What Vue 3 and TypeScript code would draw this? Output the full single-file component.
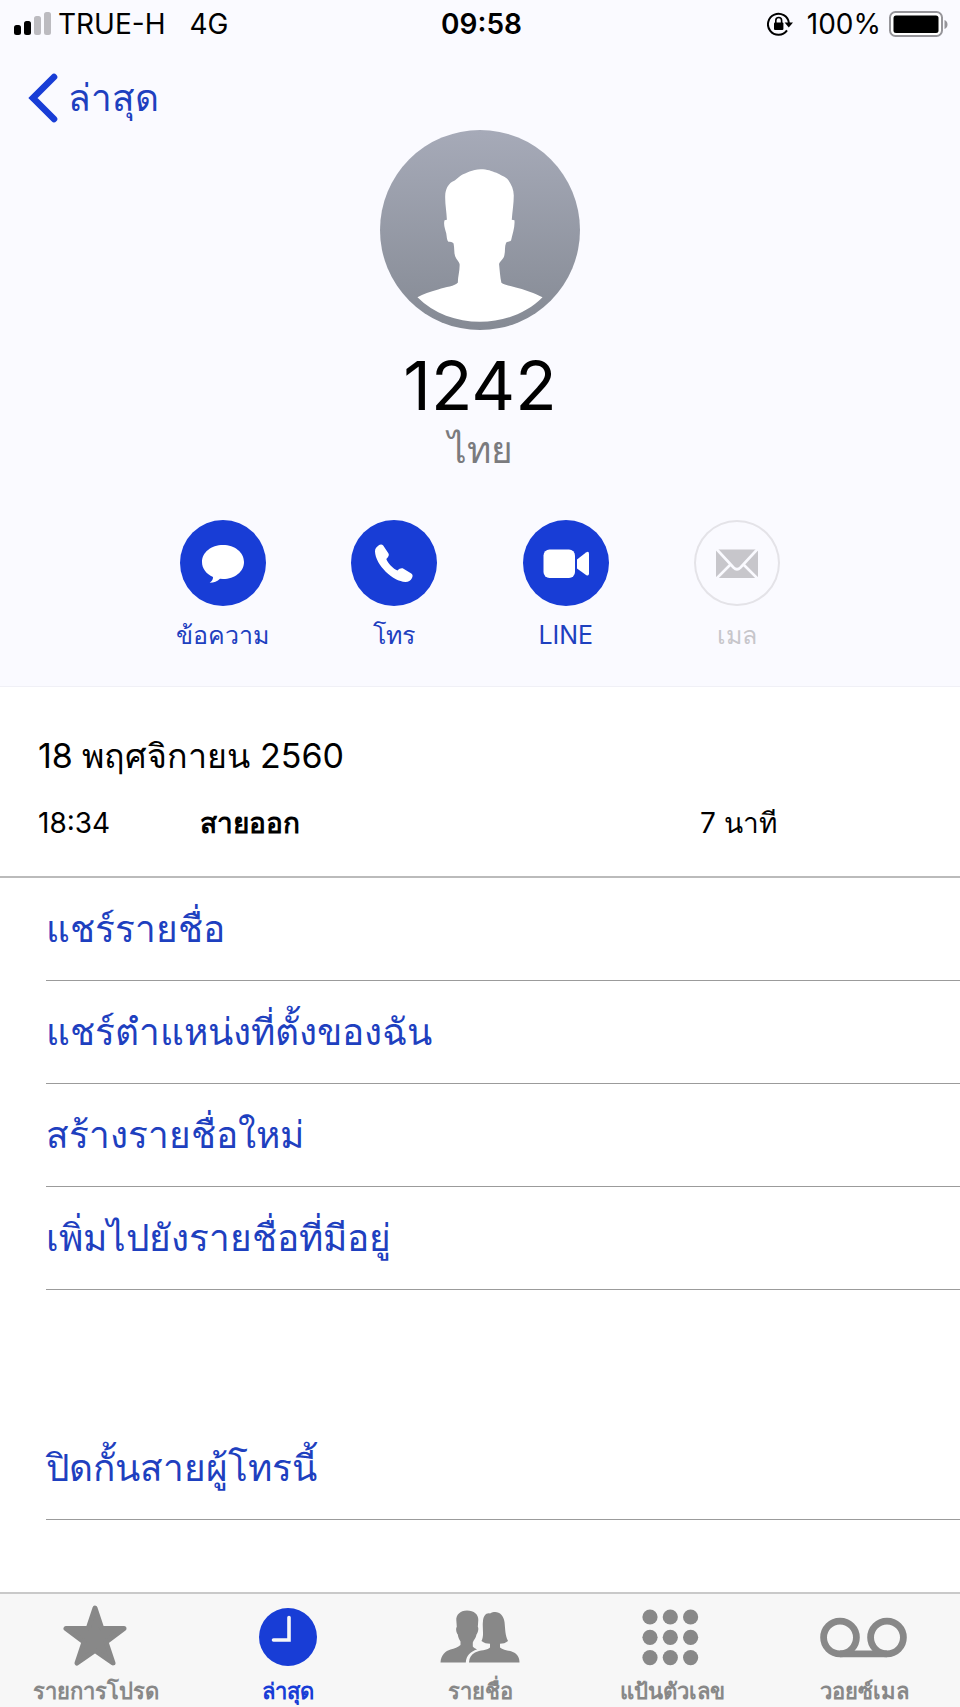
<script setup lang="ts">
import { ref } from 'vue'

interface QuickAction {
  id: string
  label: string
  disabled?: boolean
}

interface CallEntry {
  time: string
  kind: string
  duration: string
}

interface Tab {
  id: string
  label: string
}

const quickActions: QuickAction[] = [
  { id: 'message', label: 'ข้อความ' },
  { id: 'call', label: 'โทร' },
  { id: 'video', label: 'LINE' },
  { id: 'mail', label: 'เมล', disabled: true },
]

const calls: CallEntry[] = [{ time: '18:34', kind: 'สายออก', duration: '7 นาที' }]

const contactOptions: string[] = [
  'แชร์รายชื่อ',
  'แชร์ตำแหน่งที่ตั้งของฉัน',
  'สร้างรายชื่อใหม่',
  'เพิ่มไปยังรายชื่อที่มีอยู่',
]

const tabs: Tab[] = [
  { id: 'favorites', label: 'รายการโปรด' },
  { id: 'recents', label: 'ล่าสุด' },
  { id: 'contacts', label: 'รายชื่อ' },
  { id: 'keypad', label: 'แป้นตัวเลข' },
  { id: 'voicemail', label: 'วอยซ์เมล' },
]

const activeTab = ref('recents')
const dots = [8, 28.3, 48.6]
</script>

<template>
  <div class="screen">
    <header class="header">
      <div class="status">
        <div class="status-side">
          <svg class="signal" viewBox="0 0 38 24" aria-hidden="true">
            <rect x="0" y="13" width="7" height="10" rx="2.5" fill="#000" />
            <rect x="10" y="9" width="7" height="14" rx="2.5" fill="#000" />
            <rect x="20" y="4" width="7" height="19" rx="2.5" fill="#bcbbc0" />
            <rect x="30" y="0" width="7" height="23" rx="2.5" fill="#bcbbc0" />
          </svg>
          <span class="carrier">TRUE-H</span>
          <span>4G</span>
        </div>
        <time class="clock">09:58</time>
        <div class="status-side status-right">
          <svg class="lock" viewBox="0 0 26 24" aria-hidden="true">
            <path d="M20 18.400A10.500 10.500 0 1 1 21.900 11" fill="none" stroke="#000" stroke-width="2" />
            <path d="M17.600 10.600H26L21.800 15.600z" />
            <rect x="7" y="10.600" width="9.400" height="7.400" rx="1" />
            <path d="M8.800 11V8.400a2.900 2.900 0 0 1 5.800 0V11" fill="none" stroke="#000" stroke-width="1.600" />
          </svg>
          <span>100%</span>
          <svg class="battery" viewBox="0 0 60 27" aria-hidden="true">
            <rect x="1" y="1" width="52" height="24" rx="5.500" fill="#fff" stroke="#96959a" stroke-width="2" />
            <rect x="4.500" y="4.500" width="45" height="17.500" rx="2.500" />
            <path d="M55.500 9c4 1.400 4 7.600 0 9z" fill="#96959a" />
          </svg>
        </div>
      </div>

      <nav class="nav">
        <button class="back" type="button">
          <svg class="chevron" viewBox="0 0 30 50" aria-hidden="true">
            <path d="M26 4 5 25l21 21" fill="none" stroke="currentColor" stroke-width="6.600" stroke-linecap="round" stroke-linejoin="miter" />
          </svg>
          <span>ล่าสุด</span>
        </button>
      </nav>

      <svg class="avatar" viewBox="61 29 598 598" aria-hidden="true">
        <defs>
          <linearGradient id="avatar-fill" x1="0" y1="0" x2="0" y2="1">
            <stop offset="0" stop-color="#a6aab8" />
            <stop offset="1" stop-color="#858a94" />
          </linearGradient>
        </defs>
        <circle cx="360" cy="328" r="299" fill="url(#avatar-fill)" />
        <path
          fill="#fff"
          d="M362 146C337 147 318 157 304 164C294 170 288 179 277 184C264 192 257 207 256 225C255 250 260 272 261 297L254 299C250 312 256 326 259 338C261 350 261 360 266 363C271 365 277 362 281 368C284 382 282 397 286 407C290 417 297 422 299 430C300 449 293 470 294 485C285 496 258 498 235 506C210 513 190 520 173 529C270 627 450 627 547 529C520 515 500 509 476 502C454 496 433 493 424 486C420 468 419 449 417 430C421 420 431 415 433 403C436 390 433 378 438 366C443 361 450 364 453 359C457 340 465 320 463 299L455 297C457 272 461 250 461 225C461 207 454 192 445 179C436 168 421 164 409 157C395 151 382 146 362 146Z"
        />
      </svg>
      <h1 class="name">1242</h1>
      <p class="region">ไทย</p>

      <div class="actions">
        <button v-for="action in quickActions" :key="action.id" class="action" type="button" :disabled="action.disabled">
          <span class="action-disc">
            <svg viewBox="0 0 86 86" aria-hidden="true">
              <path
                v-if="action.id === 'message'"
                fill="#fff"
                d="M43 25c11.800 0 21 7.400 21 17s-9.200 17-21 17l-3-.2c-2.600 2.400-6 4-10.300 4 2.200-1.600 3.400-3.500 3.300-5.800C26.300 54 22 48.600 22 42c0-9.600 9.200-17 21-17z"
              />
              <path
                v-else-if="action.id === 'call'"
                fill="#fff"
                d="M27.500 25.500C29 24.300 31 24 32.200 25.600L37.500 33.500C38.400 35.200 37.500 36.700 35.300 39C36.500 43 42.500 49 46.500 50.500C48.500 48.500 50.500 47.800 52.500 48.700L60.300 53.400C62 54.600 61.800 56.200 61 58C59.700 60.500 57.500 62 54.500 62C42 61.500 24.500 45 24 31.500C23.900 28.800 25.500 26.900 27.500 25.500Z"
              />
              <g v-else-if="action.id === 'video'" fill="#fff">
                <rect x="20.500" y="29.500" width="31.500" height="28.500" rx="6" />
                <path d="M54 39.500 63 32.500Q66 30.500 66 34V53.500Q66 56.500 63 55L54 48.500Z" />
              </g>
              <g v-else>
                <rect x="22" y="29.500" width="42" height="28.500" fill="#c7c6cb" />
                <path d="M21 27.500 39.500 47.500Q43 51 46.500 47.500L65 27.500M21 60 36.500 44.500M65 60 49.500 44.500" fill="none" stroke="#fafaff" stroke-width="2.600" />
              </g>
            </svg>
          </span>
          <span class="action-label">{{ action.label }}</span>
        </button>
      </div>
    </header>

    <main class="content">
      <section class="log">
        <h2 class="log-date">18 พฤศจิกายน 2560</h2>
        <div v-for="call in calls" :key="call.time" class="log-row">
          <time>{{ call.time }}</time>
          <strong>{{ call.kind }}</strong>
          <span>{{ call.duration }}</span>
        </div>
      </section>

      <ul class="options">
        <li v-for="option in contactOptions" :key="option">
          <button class="option" type="button">{{ option }}</button>
        </li>
      </ul>
      <ul class="options options-block">
        <li>
          <button class="option" type="button">ปิดกั้นสายผู้โทรนี้</button>
        </li>
      </ul>
    </main>

    <nav class="tabs">
      <button
        v-for="tab in tabs"
        :key="tab.id"
        class="tab"
        :class="{ active: tab.id === activeTab }"
        type="button"
        @click="activeTab = tab.id"
      >
        <svg v-if="tab.id === 'favorites'" class="tab-icon" viewBox="0 0 90 64" aria-hidden="true">
          <path d="M44 5 50.800 25.500H73L55 39 62 60 44 47.500 26 60 33 39 15 25.500H37.200Z" fill="currentColor" stroke="currentColor" stroke-width="5" stroke-linejoin="round" />
        </svg>
        <svg v-else-if="tab.id === 'recents'" class="tab-icon" viewBox="0 0 90 64" aria-hidden="true">
          <circle cx="45" cy="34" r="29" fill="currentColor" />
          <path d="M46 14.500V37H30.500" fill="none" stroke="#f7f7f7" stroke-width="3.600" stroke-linecap="round" />
        </svg>
        <svg v-else-if="tab.id === 'contacts'" class="tab-icon" viewBox="1 1 90 64" aria-hidden="true">
          <g fill="currentColor">
            <path d="M33 8.500C40 8.500 44.500 12.500 44.300 18L43.800 25C45 26 44 31 42.500 32.500C42 36 39.500 38 38.800 40.500V44.500C40 46 41.500 46.500 43 47.500C36.500 49.500 32 54 31.800 60.500H6.500C7 53 11.500 49 16.500 47.500C20.500 46.500 24 45.500 26.500 43V39.500C25 37 24 35 23.800 32.500C22.300 31 21.500 26 22.800 25L22.300 18C22 13 26 8.500 33 8.500Z" />
            <path d="M56 11.500C63 7.500 69.500 12 70.500 20C71.300 27 71 33 74 39C71.500 41.300 69 41.500 66 41.700V45.500C69 48.500 75 48 80 50.500C83.500 52.500 85.500 55.500 85.500 60.500H35C35.300 55.500 37.300 52.500 41 50.500C46 48 53 48.500 56 45.500V41.700C53 41.500 50 41.300 47.500 39C50.500 33 48 26 49 19C49.500 14 52 10.500 56 11.500Z" />
          </g>
        </svg>
        <svg v-else-if="tab.id === 'keypad'" class="tab-icon" viewBox="-15 8 90 64" aria-hidden="true">
          <template v-for="cy in dots" :key="cy">
            <circle v-for="cx in dots" :key="cx" :cx="cx" :cy="cy + 14" r="7.600" fill="currentColor" />
          </template>
        </svg>
        <svg v-else class="tab-icon" viewBox="0 0 90 64" aria-hidden="true">
          <g fill="none" stroke="currentColor" stroke-width="6.800">
            <circle cx="21" cy="34.500" r="16.400" />
            <circle cx="68" cy="34.500" r="16.400" />
            <path d="M21 50.900H68" />
          </g>
        </svg>
        <span class="tab-label">{{ tab.label }}</span>
      </button>
    </nav>
  </div>
</template>

<style>
html,
body {
  margin: 0;
  background: #fff;
}
</style>

<style scoped>
.screen {
  --blue: #183dd6;
  --label-blue: #1e40bf;
  display: flex;
  flex-direction: column;
  min-height: 100vh;
  overflow: hidden;
  background: #fff;
  color: #000;
  font-family: Inter, sans-serif;
}

button {
  margin: 0;
  padding: 0;
  border: 0;
  background: none;
  color: inherit;
  font: inherit;
  cursor: pointer;
}

svg {
  display: block;
  flex: none;
}

.header {
  display: flex;
  flex-direction: column;
  align-items: center;
  background: #fafaff;
  border-bottom: 1px solid #f0f0f6;
}

.status {
  display: grid;
  grid-template-columns: 1fr auto 1fr;
  align-items: center;
  align-self: stretch;
  height: 48px;
  padding: 0 11px 0 14px;
  font-size: 28px;
  line-height: 32px;
}

.status-side {
  display: flex;
  align-items: center;
}

.status-right {
  justify-content: flex-end;
}

.signal {
  width: 38px;
  height: 24px;
  margin-right: 6px;
}

.carrier {
  margin-right: 24px;
}

.clock {
  font-weight: 600;
}

.lock {
  width: 26px;
  height: 24px;
  margin-right: 14px;
}

.battery {
  width: 60px;
  height: 27px;
  margin-left: 8px;
}

.nav {
  display: flex;
  align-items: center;
  align-self: stretch;
  height: 82px;
  padding: 0 28px;
}

.back {
  display: flex;
  align-items: center;
  gap: 10px;
  padding-top: 18px;
  color: var(--label-blue);
  font-size: 37px;
  line-height: 50px;
}

.chevron {
  width: 30px;
  height: 50px;
  color: var(--blue);
}

.avatar {
  width: 200px;
  height: 200px;
}

.name {
  margin: 15px 0 0;
  font-size: 68px;
  font-weight: 400;
  line-height: 80px;
}

.region {
  margin: 0;
  color: #7b7b7e;
  font-size: 37px;
  line-height: 50px;
}

.actions {
  display: grid;
  grid-template-columns: repeat(4, 1fr);
  width: 71.5%;
  margin-top: 45px;
  padding-bottom: 34px;
}

.action {
  display: flex;
  flex-direction: column;
  align-items: center;
  gap: 12px;
  color: var(--label-blue);
}

.action-disc {
  border-radius: 50%;
  background: var(--blue);
}

.action-disc svg {
  width: 86px;
  height: 86px;
}

.action:disabled {
  color: #c7c6cb;
  cursor: default;
}

.action:disabled .action-disc {
  background: none;
  box-shadow: inset 0 0 0 2px #e4e3e8;
}

.action-label {
  font-size: 25px;
  line-height: 34px;
}

.content {
  flex: 1;
}

.log {
  padding: 43px 38px 33px;
  border-bottom: 2px solid #bbb;
}

.log-date {
  margin: 0;
  font-size: 34px;
  font-weight: 400;
  line-height: 52px;
}

.log-row {
  display: grid;
  grid-template-columns: 162px 1fr 222px;
  margin-top: 21px;
  font-size: 28px;
  line-height: 40px;
}

.options {
  margin: 0;
  padding: 0 0 0 46px;
  list-style: none;
}

.options-block {
  padding-top: 127px;
}

.option {
  display: block;
  width: 100%;
  height: 103px;
  border-bottom: 1px solid #9b9b9b;
  color: var(--label-blue);
  font-size: 37px;
  line-height: 50px;
  text-align: left;
}

.tabs {
  display: grid;
  grid-template-columns: repeat(5, 1fr);
  border-top: 2px solid #c9c9c9;
  background: #f7f7f7;
}

.tab {
  display: flex;
  flex-direction: column;
  align-items: center;
  gap: 9px;
  padding: 9px 0 1px;
  color: #888;
}

.tab.active {
  color: var(--blue);
}

.tab-icon {
  width: 90px;
  height: 64px;
}

.tab-label {
  font-size: 22px;
  font-weight: 600;
  line-height: 30px;
}
</style>
